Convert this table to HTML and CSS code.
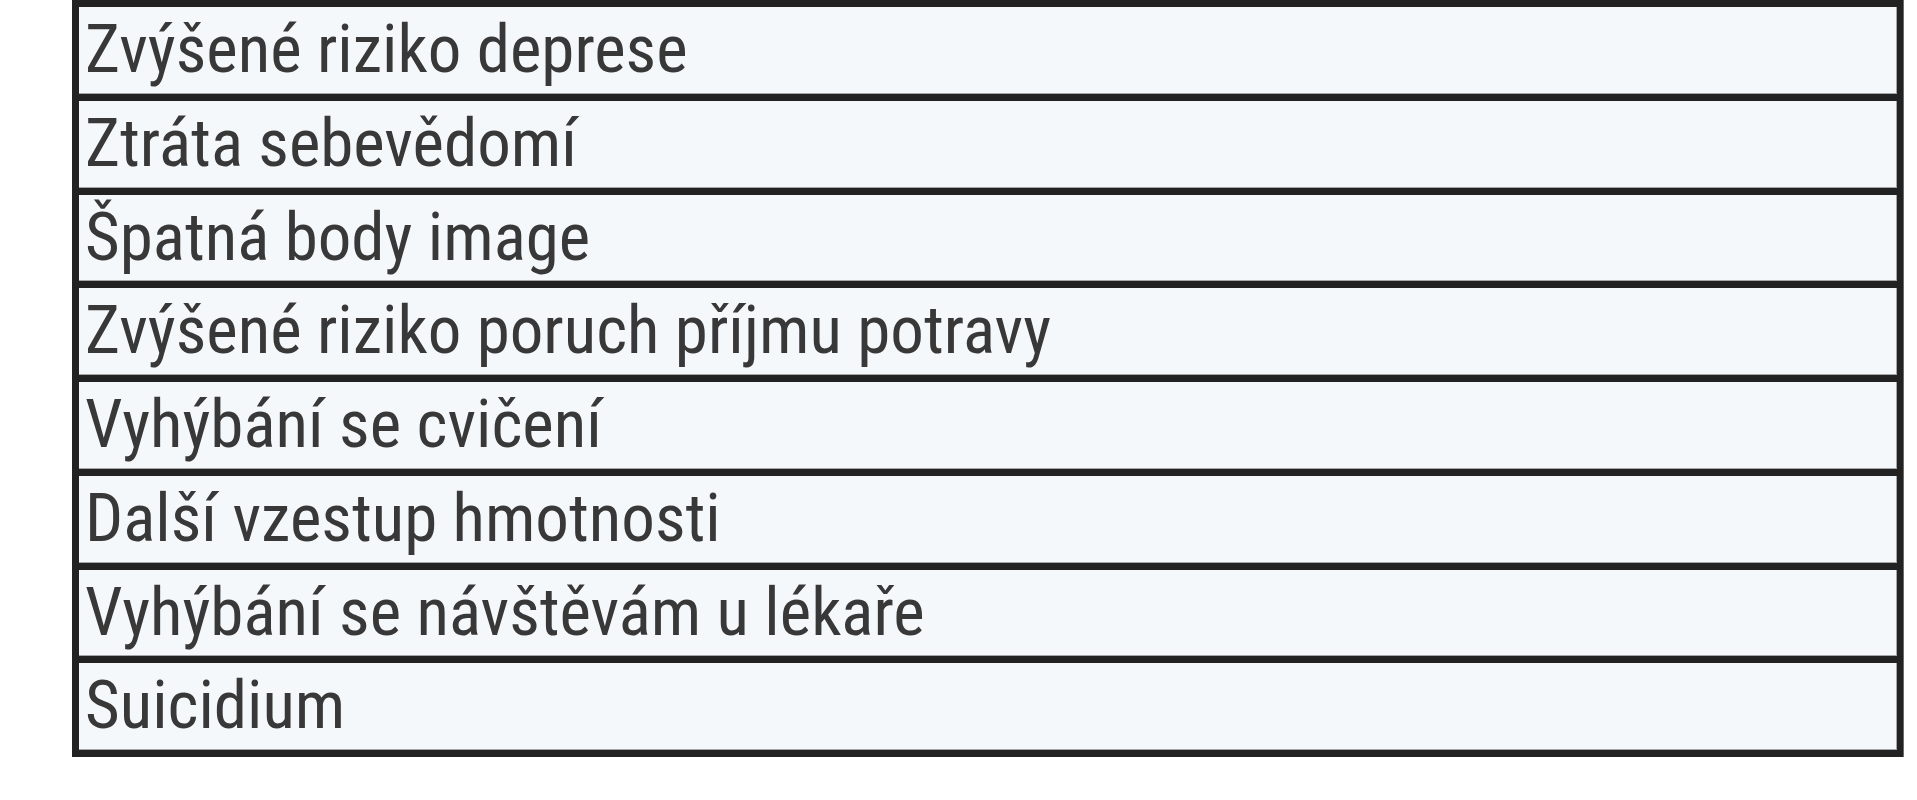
FILE: index.html
```html
<!DOCTYPE html>
<html lang="cs">
<head>
<meta charset="utf-8">
<title>Rizika</title>
<link rel="stylesheet" href="styles.css">
</head>
<body>
<div class="risk-table">
  <div class="risk-cell">Zvýšené riziko deprese</div>
  <div class="risk-cell">Ztráta sebevědomí</div>
  <div class="risk-cell">Špatná body image</div>
  <div class="risk-cell">Zvýšené riziko poruch příjmu potravy</div>
  <div class="risk-cell">Vyhýbání se cvičení</div>
  <div class="risk-cell">Další vzestup hmotnosti</div>
  <div class="risk-cell">Vyhýbání se návštěvám u lékaře</div>
  <div class="risk-cell">Suicidium</div>
</div>
</body>
</html>
```
FILE: styles.css
```css
html, body {
  margin: 0;
  padding: 0;
  background: #ffffff;
}

.risk-table {
  box-sizing: border-box;
  margin-left: 72px;
  width: 1831px;
  background: #222222;
  padding: 7px 6px 7px 7px;
  display: flex;
  flex-direction: column;
  gap: 7px;
  box-shadow: 1px 0 0 #6a6a6a;
}

.risk-cell {
  box-sizing: border-box;
  height: 86.75px;
  background: #f4f8fb;
  border-right: 1px solid #a6a6a6;
  border-bottom: 1px solid #a6a6a6;
  padding: 1px 0 0 6px;
  font-family: "Roboto Condensed", "Liberation Sans Narrow", "Liberation Sans", sans-serif;
  font-size: 67px;
  line-height: 82px;
  color: #383838;
  white-space: nowrap;
  overflow: hidden;
}
```
